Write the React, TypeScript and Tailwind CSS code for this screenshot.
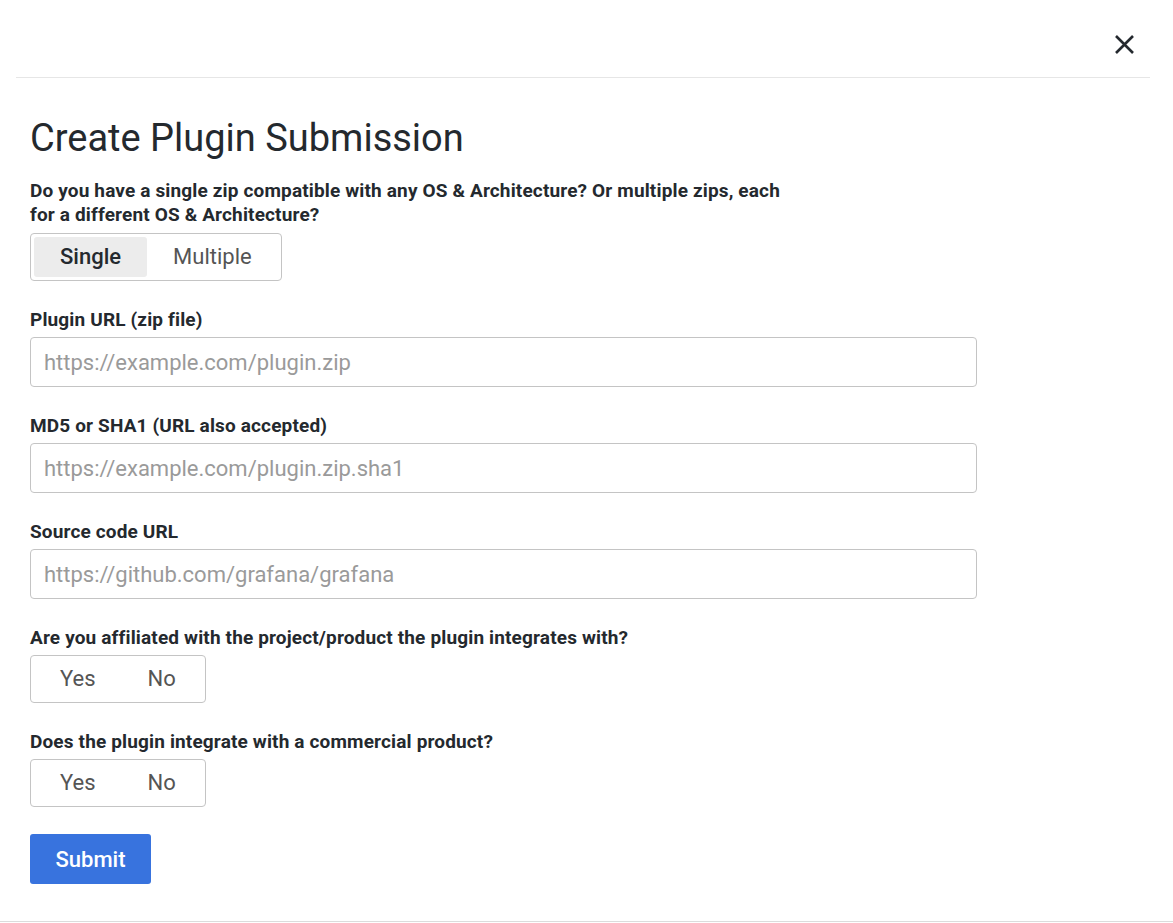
import React, { useState } from "react";

const font = { fontFamily: "Roboto, 'Liberation Sans', sans-serif" };

function Toggle({ options, value, onChange }: { options: string[]; value: string | null; onChange: (v: string) => void }) {
  return (
    <div className="inline-flex rounded-[4px] border border-[#c4c4c4] p-[3px]">
      {options.map((o) => {
        const active = value === o;
        return (
          <button
            key={o}
            onClick={() => onChange(o)}
            className={`h-10 rounded-[3px] px-[26px] text-[22px] leading-none ${
              active ? "bg-[#ececec] font-medium text-[#24292e]" : "bg-transparent text-[#555555]"
            }`}
          >
            {o}
          </button>
        );
      })}
    </div>
  );
}

function Field({ label, placeholder }: { label: string; placeholder: string }) {
  return (
    <div className="mb-[27px]">
      <label className="mb-[5px] block text-[19px] font-bold leading-6 tracking-[0.15px] text-[#24292e]">{label}</label>
      <input
        placeholder={placeholder}
        className="h-[50px] w-[947px] rounded-[4px] border border-[#c4c4c4] px-[13px] text-[22px] text-[#24292e] placeholder:text-[#9a9a9a] outline-none"
      />
    </div>
  );
}

export default function App() {
  const [zip, setZip] = useState<string | null>("Single");
  const [aff, setAff] = useState<string | null>(null);
  const [com, setCom] = useState<string | null>(null);
  return (
    <div style={font} className="h-[923px] w-[1173px] bg-white">
      <div className="h-[922px] border-b border-[#dcdcdc]">
        <div className="ml-4 mr-[23px] flex h-[78px] items-start justify-end border-b border-[#e6e6e6] pr-[15px] pt-[34px]">
          <svg width="21" height="21" viewBox="0 0 21 21" className="text-[#24292e]">
            <path d="M2 2 L19 19 M19 2 L2 19" stroke="currentColor" strokeWidth="2.6" strokeLinecap="butt" />
          </svg>
        </div>
        <div className="px-[30px] pt-[38px]">
          <h1 className="mb-[19px] text-[38px] font-normal leading-[44px] text-[#24292e]">Create Plugin Submission</h1>
          <div className="mb-[6px] text-[19px] font-bold leading-6 tracking-[0.15px] text-[#24292e]">
            Do you have a single zip compatible with any OS &amp; Architecture? Or multiple zips, each
            <br />
            for a different OS &amp; Architecture?
          </div>
          <div className="mb-[27px]">
            <Toggle options={["Single", "Multiple"]} value={zip} onChange={setZip} />
          </div>
          <Field label="Plugin URL (zip file)" placeholder="https://example.com/plugin.zip" />
          <Field label="MD5 or SHA1 (URL also accepted)" placeholder="https://example.com/plugin.zip.sha1" />
          <Field label="Source code URL" placeholder="https://github.com/grafana/grafana" />
          <div className="mb-[27px]">
            <label className="mb-[5px] block text-[19px] font-bold leading-6 tracking-[0.15px] text-[#24292e]">
              Are you affiliated with the project/product the plugin integrates with?
            </label>
            <Toggle options={["Yes", "No"]} value={aff} onChange={setAff} />
          </div>
          <div className="mb-[27px]">
            <label className="mb-[5px] block text-[19px] font-bold leading-6 tracking-[0.15px] text-[#24292e]">
              Does the plugin integrate with a commercial product?
            </label>
            <Toggle options={["Yes", "No"]} value={com} onChange={setCom} />
          </div>
          <button className="h-[50px] w-[121px] rounded-[3px] bg-[#3873de] text-[22px] font-medium text-white">Submit</button>
        </div>
      </div>
    </div>
  );
}
